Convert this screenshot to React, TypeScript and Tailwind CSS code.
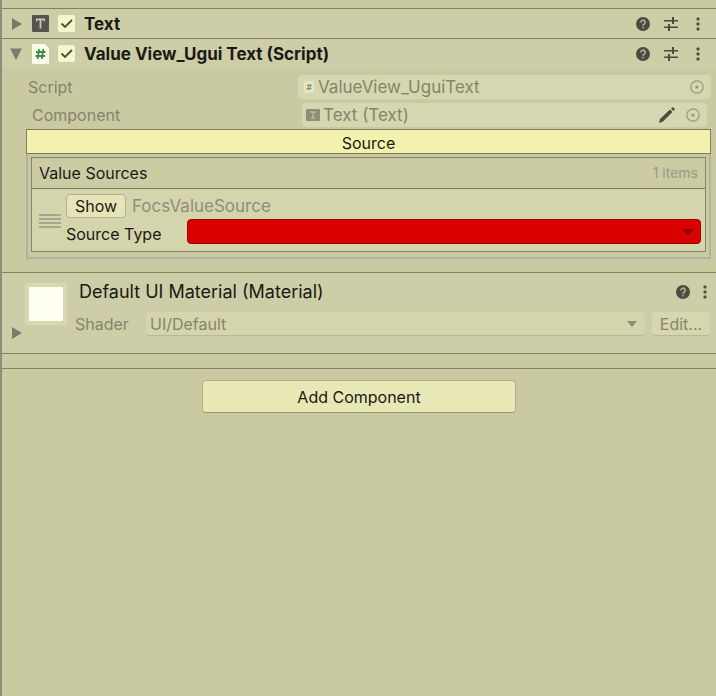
import { useState } from "react";

const PAGE = "min-h-screen border-l-2 border-[#8e8e78] bg-[#cacaa2] text-[16px] leading-5 text-[#1a1a14]";

function Help() {
  return (
    <svg width="14" height="14" viewBox="0 0 14 14" aria-hidden="true">
      <circle cx="7" cy="7" r="7" fill="#4b4b40" />
      <path d="M4.8 5.4a2.2 2.2 0 1 1 3.3 1.9c-.8.4-1.1.7-1.1 1.5" fill="none" stroke="#b4b494" strokeWidth="1.6" />
      <rect x="6.2" y="9.8" width="1.6" height="1.6" fill="#b4b494" />
    </svg>
  );
}

function Preset() {
  return (
    <svg width="14" height="14" viewBox="0 0 14 14" aria-hidden="true" fill="#4b4b40">
      <path d="M0 3h8v1.400H0zM8 0h2v7H8zM10 3h4v1.400h-4zM0 9.600h4v1.400H0zM4 7h2v7H4zM6 9.600h8v1.400H6z" />
    </svg>
  );
}

function Dots() {
  return (
    <svg width="4" height="14" viewBox="0 0 4 14" aria-hidden="true" fill="#4b4b40">
      <rect x="0.5" y="0.5" width="3" height="3" rx="1" />
      <rect x="0.5" y="5.5" width="3" height="3" rx="1" />
      <rect x="0.5" y="10.5" width="3" height="3" rx="1" />
    </svg>
  );
}

function Fold({ open = false }: { open?: boolean }) {
  return (
    <svg width="12" height="12" viewBox="0 0 12 12" aria-hidden="true" fill="#7b7b6c">
      <path d={open ? "M0 0.500h12L6 12z" : "M2 0v12l10-6z"} />
    </svg>
  );
}

function Caret({ color }: { color: string }) {
  return (
    <svg width="10" height="6" viewBox="0 0 10 6" aria-hidden="true" fill={color} className="pointer-events-none absolute right-2">
      <path d="M0 0h10L5 6z" />
    </svg>
  );
}

function Target() {
  return (
    <svg width="14" height="14" viewBox="0 0 14 14" aria-hidden="true">
      <circle cx="7" cy="7" r="6.2" fill="none" stroke="#96967f" strokeWidth="1.2" />
      <circle cx="7" cy="7" r="1.6" fill="#96967f" />
    </svg>
  );
}

function TextIcon() {
  return (
    <svg width="17" height="17" viewBox="0 0 17 17" aria-hidden="true">
      <rect width="17" height="17" rx="1" fill="#54544c" />
      <path d="M4 3.500h9v3h-1.200V5.300H9.400v8.200H7.600V5.300H5.200v1.200H4z" fill="#c9c9b0" />
    </svg>
  );
}

function ScriptIcon() {
  return (
    <svg width="17" height="20" viewBox="0 0 17 20" aria-hidden="true">
      <path d="M1 0h12l4 4v15a1 1 0 0 1-1 1H1a1 1 0 0 1-1-1V1a1 1 0 0 1 1-1z" fill="#fafaea" />
      <path d="M7.200 5 5.600 15M11.400 5 9.800 15M4 8h9.500M3.500 12H13" stroke="#3f8a4a" strokeWidth="1.800" fill="none" />
    </svg>
  );
}

function ComponentHeader({ name, script = false }: { name: string; script?: boolean }) {
  const [on, setOn] = useState(true);
  return (
    <header className="flex h-[30px] items-center border-t border-[#83835c] bg-[#cdcda8] pr-4 pl-2">
      <button type="button" aria-label={"Toggle " + name} className="flex w-[22px] items-center">
        <Fold open={script} />
      </button>
      <span className="flex w-[26px]">{script ? <ScriptIcon /> : <TextIcon />}</span>
      <label className="flex items-center gap-[9px] text-[17px] font-bold">
        <span className="relative flex size-[17px]">
          <input type="checkbox" checked={on} onChange={() => setOn(!on)} className="size-[17px] appearance-none rounded-xs bg-[#f6f6cc]" />
          {on && (
            <svg width="17" height="17" viewBox="0 0 17 17" aria-hidden="true" className="pointer-events-none absolute">
              <path d="m3.500 8.500 3.500 3.500L14 5" fill="none" stroke="#4b4b40" strokeWidth="1.800" />
            </svg>
          )}
        </span>
        {name}
      </label>
      <span className="ml-auto flex items-center gap-[14px]">
        <button type="button" aria-label="Help"><Help /></button>
        <button type="button" aria-label="Presets" className="mr-1"><Preset /></button>
        <button type="button" aria-label="More options"><Dots /></button>
      </span>
    </header>
  );
}

export default function App() {
  return (
    <main className={PAGE} style={{ fontFamily: "Inter, 'Liberation Sans', sans-serif" }}>
      <div className="h-2" />
      <ComponentHeader name="Text" />
      <ComponentHeader name="Value View_Ugui Text (Script)" script />

      <section className="pr-[5px] pb-[13px] pl-6">
        <div className="mt-[7px] flex h-6 items-center text-[#84846c]">
          <label htmlFor="script" className="w-[272px] shrink-0 pl-[2px]">Script</label>
          <div className="flex h-6 min-w-0 grow items-center rounded-sm bg-[#d6d6b0] pr-[7px] pl-[6px]">
            <span className="mr-1 flex h-3 w-[10px] items-center justify-center rounded-xs bg-[#e6e6c4] text-[8px] font-bold text-[#6f9272]">#</span>
            <input id="script" readOnly value="ValueView_UguiText" className="min-w-0 grow bg-transparent text-[17px] outline-none" />
            <button type="button" aria-label="Pick script"><Target /></button>
          </div>
        </div>
        <div className="mt-1 mb-[2px] flex h-6 items-center pr-1 text-[#84846c]">
          <label htmlFor="component" className="w-[276px] shrink-0 pl-[6px]">Component</label>
          <div className="flex h-6 min-w-0 grow items-center rounded-sm bg-[#d6d6b0] pr-[7px] pl-1">
            <svg width="14" height="12" viewBox="0 0 14 12" aria-hidden="true" className="mr-[3px]">
              <rect width="14" height="12" rx="1" fill="#8e8e78" />
              <path d="M4 3h6M7 3v6M5 9h4" stroke="#b8b898" strokeWidth="1.500" />
            </svg>
            <input id="component" readOnly value="Text (Text)" className="min-w-0 grow bg-transparent text-[17px] outline-none" />
            <button type="button" aria-label="Edit component" className="mr-[10px]">
              <svg width="18" height="18" viewBox="0 0 18 18" aria-hidden="true" fill="#4b4b40">
                <path d="m1 17 1-4L12 3.500 14.500 6 5 15.500zM13 2.500 14.800 1 17 3.200 15.500 5z" />
              </svg>
            </button>
            <button type="button" aria-label="Pick component"><Target /></button>
          </div>
        </div>

        <h2 className="flex h-[25px] items-center justify-center border border-[#7d7d5e] bg-[#f2f2ae] pt-[2px]">Source</h2>
        <div className="border-2 border-t-0 border-[#b2b2a0] px-[3px] pt-[3px] pb-[5px]">
          <div className="border border-[#85856c] bg-[#d5d5ad]">
            <div className="flex h-[31px] items-center justify-between border-b border-[#7d7d64] bg-[#cbcba4] px-[7px]">
              <h3>Value Sources</h3>
              <span className="text-[14px] text-[#9a9a82]">1 items</span>
            </div>
            <div className="flex items-center gap-[5px] pt-[5px] pr-1 pb-[7px] pl-[7px]">
              <svg width="22" height="14" viewBox="0 0 22 14" aria-hidden="true" stroke="#a6a692" strokeWidth="2" className="mt-1">
                <path d="M0 1h22M0 5h22M0 9h22M0 13h22" />
              </svg>
              <div className="min-w-0 grow">
                <div className="flex items-center gap-[6px]">
                  <button type="button" className="h-6 w-[60px] rounded-sm border border-[#b4b48e] bg-[#e5e5b8]">Show</button>
                  <span className="text-[17px] text-[#8e8e76]">FocsValueSource</span>
                </div>
                <div className="mt-px flex items-center">
                  <label htmlFor="type" className="w-[121px] shrink-0 pt-1">Source Type</label>
                  <div className="relative flex min-w-0 grow items-center">
                    <select id="type" className="h-[25px] w-full appearance-none rounded border border-[#a00000] bg-[#db0000]" />
                    <Caret color="#780000" />
                  </div>
                </div>
              </div>
            </div>
          </div>
        </div>
      </section>

      <section className="flex h-[81px] border-t border-[#83835c] bg-[#cdcda8] pr-[6px] pl-2">
        <button type="button" aria-label="Expand material" className="mb-[14px] self-end"><Fold /></button>
        <div className="mt-[10px] ml-[3px] flex size-[42px] shrink-0 items-center justify-center bg-[#d8d8b0]">
          <div className="size-[34px] bg-[#fffff4]" />
        </div>
        <div className="ml-2 min-w-0 grow">
          <div className="mt-[7px] flex h-6 items-center pl-1">
            <h2 className="text-[18px]">Default UI Material (Material)</h2>
            <span className="ml-auto flex items-center gap-[13px] pr-[3px]">
              <button type="button" aria-label="Help"><Help /></button>
              <button type="button" aria-label="More options"><Dots /></button>
            </span>
          </div>
          <div className="mt-2 flex h-6 items-center text-[#84846c]">
            <label htmlFor="shader" className="w-[71px] shrink-0">Shader</label>
            <div className="relative flex min-w-0 grow items-center">
              <select id="shader" className="h-6 w-full appearance-none rounded-sm border-b border-[#b8b898] bg-[#d4d4ad] pl-1">
                <option>UI/Default</option>
              </select>
              <Caret color="#8b8b70" />
            </div>
            <button type="button" className="ml-[7px] h-6 w-[58px] rounded-sm border-b border-[#b8b898] bg-[#d6d6af]">Edit...</button>
          </div>
        </div>
      </section>
      <div className="h-4 border-y border-[#83835c]" />

      <button type="button" className="mx-auto mt-[11px] block h-[33px] w-[314px] rounded-sm border border-[#b0b08a] border-b-[#95956f] bg-[#e8e8b7]">
        Add Component
      </button>
    </main>
  );
}
